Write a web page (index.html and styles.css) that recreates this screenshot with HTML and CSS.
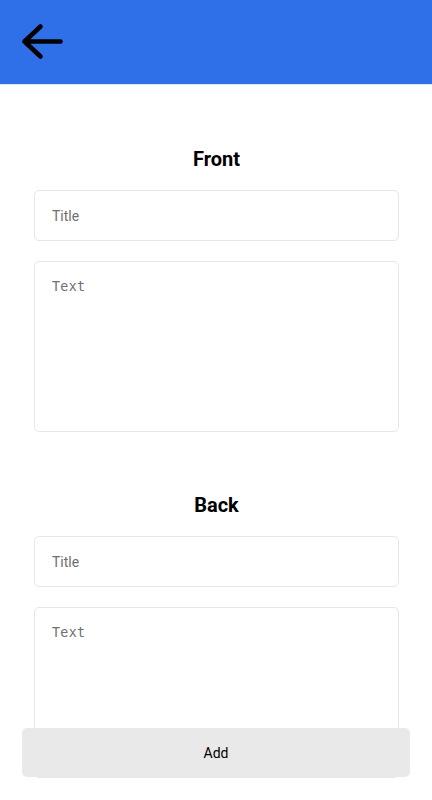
FILE: index.html
```html
<!DOCTYPE html>
<html lang="en">
<head>
<meta charset="utf-8">
<meta name="viewport" content="width=device-width, initial-scale=1">
<title>Add card</title>
<link rel="stylesheet" href="styles.css">
</head>
<body>
<header class="topbar">
  <button class="back" type="button" aria-label="Back">
    <svg width="50" height="44" viewBox="0 0 50 44" fill="none" stroke="#000" stroke-width="4.6" stroke-linecap="round" stroke-linejoin="round">
      <path d="M6.5 21.5 H42.5 M6.5 21.5 L22.5 6.5 M6.5 21.5 L22.5 36.5"/>
    </svg>
  </button>
</header>
<main class="content">
  <section class="side">
    <h2 class="side-title">Front</h2>
    <input class="field" type="text" placeholder="Title">
    <textarea class="area" placeholder="Text"></textarea>
  </section>
  <section class="side">
    <h2 class="side-title">Back</h2>
    <input class="field" type="text" placeholder="Title">
    <textarea class="area" placeholder="Text"></textarea>
  </section>
</main>
<button class="add" type="button">Add</button>
</body>
</html>
```

FILE: styles.css
```css
* { box-sizing: border-box; }
body {
  margin: 0;
  font-family: Roboto, "Noto Sans", sans-serif;
  background: #fff;
  color: #000;
}
.topbar {
  height: 85px;
  background: #2f6fe8;
  border-bottom: 1px solid #dfe3ea;
  display: flex;
  align-items: center;
  padding-left: 18px;
  padding-bottom: 1px;
}
.back {
  background: none;
  border: 0;
  padding: 0;
  display: flex;
  cursor: pointer;
}
.content {
  width: 365px;
  margin: 0 33px 0 34px;
  padding-top: 1px;
  padding-bottom: 120px;
}
.side {
  display: flex;
  flex-direction: column;
  gap: 20px;
  padding-top: 61px;
}
.side-title {
  margin: 0 0 -1px;
  text-align: center;
  font-size: 20px;
  line-height: 24px;
  font-weight: 700;
}
.field {
  height: 51px;
  border: 1px solid #e7e7e7;
  border-radius: 5px;
  padding: 0 17px;
  font-family: Roboto, sans-serif;
  font-size: 14px;
  color: #000;
  outline: none;
}
.field::placeholder { color: #6f6f6f; }
.area {
  height: 171px;
  border: 1px solid #e7e7e7;
  border-radius: 5px;
  padding: 17px 17px;
  font-family: "DejaVu Sans Mono", monospace;
  font-size: 13.33px;
  letter-spacing: 0.3px;
  color: #000;
  outline: none;
  resize: none;
}
.area::placeholder { color: #6f6f6f; }
.add {
  position: fixed;
  left: 22px;
  right: 22px;
  bottom: 23px;
  height: 49px;
  border: 0;
  border-radius: 5px;
  background: #e9e9e9;
  font-family: Roboto, sans-serif;
  font-size: 14px;
  color: #000;
}
```
